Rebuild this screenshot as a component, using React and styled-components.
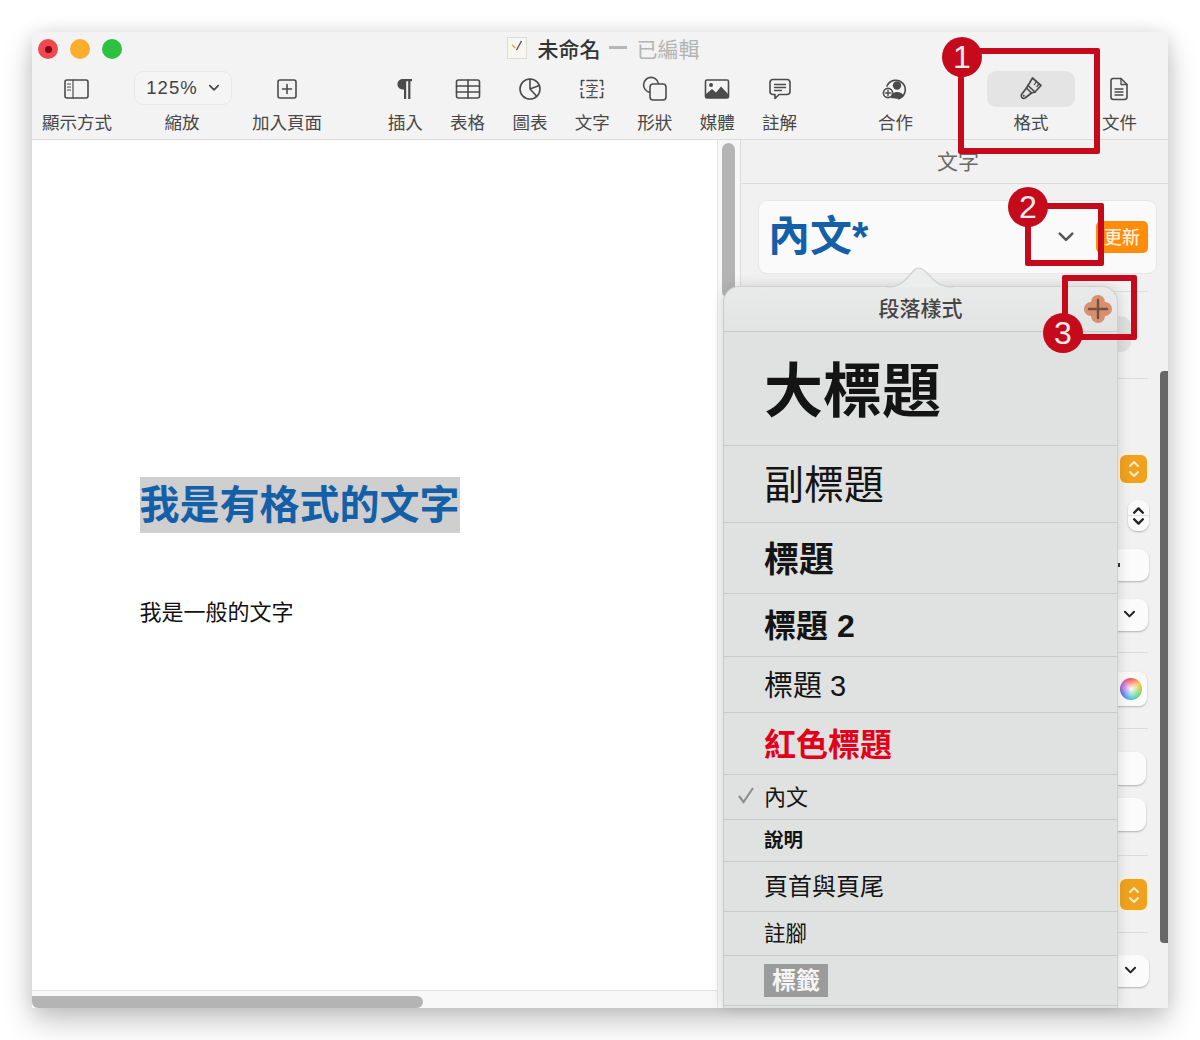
import React from 'react';
import styled, { createGlobalStyle } from 'styled-components';

const GlobalStyle = createGlobalStyle`
  html, body {
    margin: 0;
    padding: 0;
    background: #ffffff;
  }
  body {
    font-family: "Liberation Sans", "Noto Sans CJK TC", sans-serif;
  }
`;

const Page = styled.div`
  width: 1200px;
  height: 1040px;
  padding: 32px;
  box-sizing: border-box;
  overflow: hidden;
`;

const Window = styled.div`
  position: relative;
  width: 1136px;
  height: 976px;
  display: flex;
  flex-direction: column;
  background: #f2f3f2;
  border-radius: 6px 6px 0 0;
  box-shadow: 0 14px 30px rgba(0, 0, 0, 0.22), 0 0 18px rgba(0, 0, 0, 0.1);
`;

const TitleBar = styled.div`
  position: relative;
  height: 34px;
  flex: none;
  display: flex;
  align-items: center;
  justify-content: center;
`;

const Lights = styled.div`
  position: absolute;
  left: 6px;
  top: 7px;
  display: flex;
  gap: 12px;
`;

const Light = styled.span`
  width: 20px;
  height: 20px;
  border-radius: 50%;
  background: ${p => p.$color};
  display: flex;
  align-items: center;
  justify-content: center;
`;

const LightDot = styled.span`
  width: 7px;
  height: 7px;
  border-radius: 50%;
  background: #7a0a10;
`;

const TitleWrap = styled.div`
  display: flex;
  align-items: center;
  margin: -3px 0 0 5px;
  height: 32px;
`;

const TitleName = styled.span`
  font-size: 21px;
  font-weight: 500;
  color: #333;
  margin-left: 10px;
`;

const TitleDash = styled.span`
  width: 18px;
  height: 2.5px;
  background: #b5b7b6;
  margin: 0 10px 0 8px;
`;

const TitleState = styled.span`
  font-size: 21px;
  color: #b3b5b4;
`;

const Toolbar = styled.div`
  height: 74px;
  flex: none;
  display: flex;
  padding-top: 5px;
  box-sizing: border-box;
  border-bottom: 1px solid #d9dad9;
`;

const ToolItem = styled.div`
  width: ${p => p.$w}px;
  margin-left: ${p => p.$ml || 0}px;
  flex: none;
  display: flex;
  flex-direction: column;
  align-items: center;
`;

const IconSlot = styled.div`
  height: 36px;
  width: ${p => (p.$active ? '88px' : 'auto')};
  min-width: 30px;
  display: flex;
  align-items: center;
  justify-content: center;
  margin-bottom: 4px;
  border-radius: 9px;
  background: ${p => (p.$active ? '#e3e4e3' : 'transparent')};
  color: #4b4b4b;
`;

const ToolLabel = styled.div`
  font-size: 17.5px;
  line-height: 24px;
  color: #474747;
  white-space: nowrap;
`;

const ZoomSelect = styled.div`
  width: 98px;
  height: 34px;
  box-sizing: border-box;
  border: 1.5px solid #e8e9e7;
  border-radius: 9px;
  background: #f4f5f4;
  display: flex;
  align-items: center;
  justify-content: center;
  gap: 10px;
  font-size: 18.5px;
  letter-spacing: 1px;
  color: #444;
  margin: 0 0 6px 2px;
`;

const Body = styled.div`
  flex: 1;
  min-height: 0;
  display: flex;
`;

const DocColumn = styled.div`
  width: 685px;
  flex: none;
  display: flex;
  flex-direction: column;
`;

const Canvas = styled.div`
  flex: 1;
  background: #ffffff;
  border-bottom: 1.5px solid #e2e2e2;
  padding: 337px 0 0 107.5px;
  box-sizing: border-box;
`;

const Heading = styled.div`
  display: inline-block;
  height: 56px;
  line-height: 56px;
  font-size: 40px;
  font-weight: 700;
  color: #1460a8;
  background: #cfcfcf;
  white-space: nowrap;
`;

const PlainText = styled.div`
  margin-top: 64px;
  font-size: 22px;
  line-height: 32px;
  color: #111;
`;

const HTrack = styled.div`
  height: 17px;
  flex: none;
  display: flex;
  align-items: flex-end;
  background: #f8f8f8;
`;

const HThumb = styled.div`
  width: 391px;
  height: 12px;
  background: #b4b4b4;
  border-radius: 0 6px 6px 6px;
`;

const VGutter = styled.div`
  width: 24px;
  flex: none;
  box-sizing: border-box;
  background: #f7f7f7;
  border-left: 1.5px solid #e6e6e6;
  border-right: 1.5px solid #dcdcdc;
  padding: 3px 0 0 4px;
`;

const VThumb = styled.div`
  width: 13px;
  height: 155px;
  background: #b4b4b4;
  border-radius: 7px;
`;

const Inspector = styled.div`
  position: relative;
  flex: 1;
  display: flex;
  flex-direction: column;
  background: #f0f1f0;
`;

const PanelTitle = styled.div`
  height: 44px;
  flex: none;
  box-sizing: border-box;
  border-bottom: 1px solid #dcdddc;
  display: flex;
  align-items: center;
  justify-content: center;
  font-size: 21px;
  color: #6a6a6a;
  padding: 0 0 4px 7px;
`;

const StyleBox = styled.div`
  margin: 16px 11px 0 17px;
  height: 74px;
  flex: none;
  box-sizing: border-box;
  background: #fafafa;
  border: 1.5px solid #e6e7e6;
  border-radius: 9px;
  display: flex;
  align-items: center;
  padding: 0 8px 0 9px;
`;

const StyleName = styled.div`
  font-size: 42px;
  font-weight: 700;
  color: #1460a8;
  flex: 1;
  line-height: 74px;
`;

const UpdateButton = styled.div`
  width: 52px;
  height: 32px;
  background: #ff8c0a;
  color: #fff0dc;
  border-radius: 5px;
  margin-left: 21px;
  padding-bottom: 2px;
  box-sizing: border-box;
  font-size: 18px;
  font-weight: 500;
  display: flex;
  align-items: center;
  justify-content: center;
`;

const Rule = styled.div`
  margin: ${p => p.$top}px 20px 0 17px;
  height: 1px;
  flex: none;
  background: #dcdddc;
`;

const Control = styled.div`
  align-self: flex-end;
  flex: none;
  width: 200px;
  height: ${p => p.$h}px;
  margin: ${p => p.$top}px ${p => p.$right || 19}px 0 0;
  background: #fbfbfb;
  border-radius: 9px;
  box-shadow: 0 1px 2px rgba(0, 0, 0, 0.28);
  display: flex;
  align-items: center;
  justify-content: flex-end;
  padding-right: ${p => p.$pad || 12}px;
  box-sizing: border-box;
`;

const ControlTick = styled.span`
  width: 2.5px;
  height: 4px;
  background: #333;
`;

const Segmented = styled.div`
  align-self: flex-end;
  flex: none;
  width: 200px;
  height: 36px;
  margin: 24px 37px 0 0;
  background: #dfdfdf;
  border-radius: 10px;
`;

const OrangeStepper = styled.div`
  align-self: flex-end;
  flex: none;
  width: 27px;
  height: ${p => p.$h}px;
  margin: ${p => p.$top}px 21px 0 0;
  box-sizing: border-box;
  background: #f0a21e;
  border-radius: 6px;
  box-shadow: 0 0 0 2.5px #fbf3e2;
  display: flex;
  align-items: center;
  justify-content: center;
`;

const SmallStepper = styled.div`
  align-self: flex-end;
  flex: none;
  width: 21px;
  height: 31px;
  margin: 17px 19px 0 0;
  background: linear-gradient(#fafafa 49%, #dedede 49%, #dedede 52%, #fafafa 52%);
  border-radius: 9px;
  box-shadow: 0 1px 2px rgba(0, 0, 0, 0.28);
  display: flex;
  align-items: center;
  justify-content: center;
`;

const ColorWell = styled.div`
  align-self: flex-end;
  flex: none;
  width: 200px;
  height: 34px;
  margin: 19px 21px 0 0;
  background: #fafafa;
  border-radius: 8px;
  box-shadow: 0 1px 2px rgba(0, 0, 0, 0.25);
  display: flex;
  align-items: center;
  justify-content: flex-end;
  padding-right: 5px;
  box-sizing: border-box;
`;

const Wheel = styled.div`
  width: 22px;
  height: 22px;
  border-radius: 50%;
  background:
    radial-gradient(circle, rgba(255, 255, 255, 0.95) 0%, rgba(255, 255, 255, 0) 70%),
    conic-gradient(#f5504a, #f7c23e, #6fd35a, #3fc6d6, #5b6be0, #c658d0, #f5504a);
`;

const Scroller = styled.div`
  position: absolute;
  right: 0;
  top: 231px;
  width: 8px;
  height: 572px;
  background: #676767;
  border-radius: 4px 0 0 4px;
`;

const Popover = styled.div`
  position: absolute;
  left: 691px;
  top: 254px;
  width: 395px;
  bottom: 0;
  display: flex;
  flex-direction: column;
  background: #e0e2e1;
  border-left: 1.5px solid #c9cbca;
  border-right: 1px solid #cfd0cf;
  border-top: 1.5px solid #d0d1d0;
  border-radius: 16px 16px 0 0;
  box-sizing: border-box;
  box-shadow: 0 0 14px rgba(0, 0, 0, 0.14);
`;

const PopArrow = styled.svg`
  position: absolute;
  left: 163px;
  top: -21px;
`;

const PopHeader = styled.div`
  height: 45px;
  flex: none;
  display: flex;
  align-items: center;
  justify-content: center;
  font-size: 21px;
  font-weight: 500;
  color: #444;
  border-radius: 16px 16px 0 0;
  background: linear-gradient(#e9eaea, #e2e4e3);
  border-bottom: 1.5px solid #c9cbca;
  padding-bottom: 5px;
  box-sizing: border-box;
`;

const PlusButton = styled.svg`
  position: absolute;
  right: 4px;
  top: 7px;
`;

const RowList = styled.div`
  flex: 1;
  min-height: 0;
  overflow: hidden;
`;

const Row = styled.div`
  height: ${p => p.$h}px;
  box-sizing: border-box;
  border-bottom: 1.5px solid #c9cbca;
  display: flex;
  align-items: center;
  padding: 0 0 4px 40px;
  font-size: ${p => p.$size}px;
  font-weight: ${p => p.$weight || 400};
  color: ${p => p.$color || '#141414'};
  white-space: nowrap;
`;

const RowCheck = styled.svg`
  margin-left: -27px;
  margin-right: 9px;
  flex: none;
`;

const TagChip = styled.span`
  background: #9b9b9b;
  color: #f5f5f5;
  padding: 0 8px;
  margin-top: 4px;
  height: 33px;
  line-height: 33px;
  font-size: 24px;
  font-weight: 700;
`;

const CalloutBox = styled.div`
  position: absolute;
  left: ${p => p.$x}px;
  top: ${p => p.$y}px;
  width: ${p => p.$w}px;
  height: ${p => p.$h}px;
  box-sizing: border-box;
  border: 6px solid #c50a1c;
  border-radius: 2px;
  pointer-events: none;
`;

const Badge = styled.div`
  position: absolute;
  left: ${p => p.$x}px;
  top: ${p => p.$y}px;
  width: 40px;
  height: 40px;
  border-radius: 50%;
  background: #c50a1c;
  color: #fbeeee;
  font-size: 32px;
  line-height: 40px;
  font-weight: 500;
  text-align: center;
`;

const stroke = { fill: 'none', stroke: 'currentColor', strokeWidth: 1.6, strokeLinejoin: 'round', strokeLinecap: 'round' };

const ViewIcon = () => (
  <svg width="26" height="22" viewBox="0 0 26 22">
    <rect x="1" y="2" width="23" height="18" rx="2" {...stroke} />
    <path d="M9 2v18M3.5 6h3M3.5 9h3M3.5 12h3" {...stroke} strokeWidth="1.2" />
  </svg>
);

const AddPageIcon = () => (
  <svg width="22" height="22" viewBox="0 0 22 22">
    <rect x="2" y="2" width="18" height="18" rx="2" {...stroke} />
    <path d="M11 6.5v9M6.5 11h9" {...stroke} />
  </svg>
);

const ParagraphIcon = () => (
  <svg width="18" height="24" viewBox="0 0 18 24">
    <path d="M7.5 2H16v2.2h-1.6V22h-2.2V4.2h-2V22H8V12.6C3.8 12.6 1.5 10.4 1.5 7.2S3.8 2 7.5 2z" fill="currentColor" />
  </svg>
);

const TableIcon = () => (
  <svg width="26" height="22" viewBox="0 0 26 22">
    <rect x="1.5" y="2" width="23" height="18" rx="2" {...stroke} />
    <path d="M1.5 8h23M1.5 14h23M13 2v18" {...stroke} />
  </svg>
);

const ChartIcon = () => (
  <svg width="24" height="24" viewBox="0 0 24 24">
    <circle cx="12" cy="12" r="10" {...stroke} />
    <path d="M12 2v10l6.5 7M12 12l9.2-3.5" {...stroke} />
  </svg>
);

const TextIcon = () => (
  <svg width="26" height="22" viewBox="0 0 26 22">
    <path d="M5 2.5H2.5v5M2.5 14.5v5H5M21 2.5h2.5v5M23.5 14.5v5H21M1.5 11h2M22.5 11h2M8 2.5h10M8 19.5h10" {...stroke} />
    <text x="13" y="16" fontSize="13" textAnchor="middle" fill="currentColor" fontFamily="'Noto Sans CJK TC', sans-serif">字</text>
  </svg>
);

const ShapeIcon = () => (
  <svg width="26" height="26" viewBox="0 0 26 26">
    <path d="M7.5 16.2A7.5 7.5 0 1 1 16.4 7.3" {...stroke} />
    <rect x="8" y="8" width="16" height="16" rx="3" {...stroke} />
  </svg>
);

const MediaIcon = () => (
  <svg width="26" height="22" viewBox="0 0 26 22">
    <rect x="1.5" y="2" width="23" height="18" rx="1.5" {...stroke} />
    <path d="M2 20v-4l6-5 4 3.5 5-6 7 7.5V20z" fill="currentColor" />
    <circle cx="7" cy="7" r="2" fill="currentColor" />
  </svg>
);

const CommentIcon = () => (
  <svg width="24" height="24" viewBox="0 0 24 24">
    <path d="M5 2.5h14a3 3 0 0 1 3 3v9a3 3 0 0 1-3 3h-8l-4 4v-4H5a3 3 0 0 1-3-3v-9a3 3 0 0 1 3-3z" {...stroke} />
    <path d="M6.5 7.5h11M6.5 10.5h11M6.5 13.5h7" {...stroke} strokeWidth="1.3" />
  </svg>
);

const CollabIcon = () => (
  <svg width="26" height="24" viewBox="0 0 26 24">
    <path d="M5 9a9.5 9.5 0 1 1 11.5 12.8" {...stroke} />
    <circle cx="15" cy="8.5" r="4.2" fill="currentColor" />
    <path d="M8.8 21c.5-4 3-6 6.2-6s5.6 1.4 6.5 3.5c-1.6 2-3.8 3.2-6.3 3.3z" fill="currentColor" />
    <circle cx="6" cy="16" r="4.6" fill="#f2f3f2" stroke="currentColor" strokeWidth="1.6" />
    <path d="M6 13.5v5M3.5 16h5" {...stroke} strokeWidth="1.4" />
  </svg>
);

const BrushIcon = () => (
  <svg width="24" height="26" viewBox="0 0 24 26">
    <path d="M13.5 2L22 9.5 16 16 9 9.5z" {...stroke} strokeWidth="1.7" />
    <path d="M9 9.5L7.5 12l5 5 3.500-1" {...stroke} strokeWidth="1.7" />
    <path d="M7.500 12l-5 6.500a2.600 2.600 0 0 0 3.500 3.500l6.500-5" {...stroke} strokeWidth="1.7" />
    <path d="M17.500 5.500l-2 3M20 8l-2 2.500" {...stroke} strokeWidth="1.3" />
    <circle cx="4.800" cy="19.800" r="1" fill="currentColor" />
  </svg>
);

const DocIcon = () => (
  <svg width="20" height="24" viewBox="0 0 20 24">
    <path d="M4 1.5h8l6 6V20a2.5 2.5 0 0 1-2.5 2.5h-11A2.5 2.5 0 0 1 2 20V3.5a2 2 0 0 1 2-2z" {...stroke} />
    <path d="M12 1.5v6h6M6 12h8M6 15h8M6 18h8" {...stroke} strokeWidth="1.3" />
  </svg>
);

const Chevron = ({ size = 14, color = '#333', width = 2 }) => (
  <svg width={size} height={size * 0.7} viewBox="0 0 14 10">
    <path d="M2 2l5 5 5-5" fill="none" stroke={color} strokeWidth={width} strokeLinecap="round" strokeLinejoin="round" />
  </svg>
);

const UpDown = ({ color, width = 2, w = 12, h = 22 }) => (
  <svg width={w} height={h} viewBox="0 0 12 22">
    <path d="M2 8l4-4 4 4M2 14l4 4 4-4" fill="none" stroke={color} strokeWidth={width} strokeLinecap="round" strokeLinejoin="round" />
  </svg>
);

const DocGlyph = () => (
  <svg width="22" height="24" viewBox="0 0 22 24">
    <rect x="1.5" y="1.5" width="19" height="21" fill="#f8f6f0" stroke="#dcdcd8" />
    <path d="M15.5 5l-5 9" stroke="#5f5a50" strokeWidth="1.5" />
    <path d="M6 9l3.5 3" stroke="#e0a040" strokeWidth="1.3" />
  </svg>
);

const tools = [
  { label: '插入', icon: <ParagraphIcon />, ml: 42 },
  { label: '表格', icon: <TableIcon /> },
  { label: '圖表', icon: <ChartIcon /> },
  { label: '文字', icon: <TextIcon /> },
  { label: '形狀', icon: <ShapeIcon /> },
  { label: '媒體', icon: <MediaIcon /> },
  { label: '註解', icon: <CommentIcon /> },
];

const styles = [
  { name: '大標題', h: 114, size: 59, weight: 700 },
  { name: '副標題', h: 77, size: 40 },
  { name: '標題', h: 71, size: 35, weight: 700 },
  { name: '標題 2', h: 63, size: 32, weight: 700 },
  { name: '標題 3', h: 56, size: 29 },
  { name: '紅色標題', h: 62, size: 32, weight: 700, color: '#e2001a' },
  { name: '內文', h: 45, size: 22, checked: true },
  { name: '說明', h: 42, size: 19.5, weight: 700 },
  { name: '頁首與頁尾', h: 50, size: 24 },
  { name: '註腳', h: 44, size: 21.5 },
];

export default function App() {
  return (
    <Page>
      <GlobalStyle />
      <Window>
        <TitleBar>
          <Lights>
            <Light $color="#f0484e"><LightDot /></Light>
            <Light $color="#fbae2b" />
            <Light $color="#2cc13e" />
          </Lights>
          <TitleWrap>
            <DocGlyph />
            <TitleName>未命名</TitleName>
            <TitleDash />
            <TitleState>已編輯</TitleState>
          </TitleWrap>
        </TitleBar>

        <Toolbar>
          <ToolItem $w={90}>
            <IconSlot><ViewIcon /></IconSlot>
            <ToolLabel>顯示方式</ToolLabel>
          </ToolItem>
          <ToolItem $w={120}>
            <ZoomSelect>125% <Chevron size={12} color="#444" /></ZoomSelect>
            <ToolLabel>縮放</ToolLabel>
          </ToolItem>
          <ToolItem $w={90}>
            <IconSlot><AddPageIcon /></IconSlot>
            <ToolLabel>加入頁面</ToolLabel>
          </ToolItem>
          {tools.map(t => (
            <ToolItem key={t.label} $w={62.4} $ml={t.ml}>
              <IconSlot>{t.icon}</IconSlot>
              <ToolLabel>{t.label}</ToolLabel>
            </ToolItem>
          ))}
          <ToolItem $w={60} $ml={54.7}>
            <IconSlot><CollabIcon /></IconSlot>
            <ToolLabel>合作</ToolLabel>
          </ToolItem>
          <ToolItem $w={90} $ml={60.5}>
            <IconSlot $active><BrushIcon /></IconSlot>
            <ToolLabel>格式</ToolLabel>
          </ToolItem>
          <ToolItem $w={60} $ml={13.5}>
            <IconSlot><DocIcon /></IconSlot>
            <ToolLabel>文件</ToolLabel>
          </ToolItem>
        </Toolbar>

        <Body>
          <DocColumn>
            <Canvas>
              <Heading>我是有格式的文字</Heading>
              <PlainText>我是一般的文字</PlainText>
            </Canvas>
            <HTrack><HThumb /></HTrack>
          </DocColumn>
          <VGutter><VThumb /></VGutter>
          <Inspector>
            <PanelTitle>文字</PanelTitle>
            <StyleBox>
              <StyleName>內文*</StyleName>
              <Chevron size={18} color="#555" />
              <UpdateButton>更新</UpdateButton>
            </StyleBox>
            <Rule $top={17} />
            <Segmented />
            <Rule $top={26} />
            <OrangeStepper $top={76} $h={28}><UpDown color="#fdeccb" /></OrangeStepper>
            <SmallStepper><UpDown color="#222" width={2.2} w={13} h={26} /></SmallStepper>
            <Control $top={18} $h={32} $pad={29}><ControlTick /></Control>
            <Control $top={18} $h={32} $right={20}><Chevron size={13} color="#222" width={2.2} /></Control>
            <Rule $top={21} />
            <ColorWell><Wheel /></ColorWell>
            <Rule $top={22} />
            <Control $top={23} $h={33} $right={22} />
            <Control $top={13} $h={33} $right={22} />
            <Rule $top={24} />
            <OrangeStepper $top={23} $h={31}><UpDown color="#fdeccb" /></OrangeStepper>
            <Rule $top={22} />
            <Control $top={22} $h={32}><Chevron size={13} color="#222" width={2.2} /></Control>
            <Scroller />
          </Inspector>
        </Body>

        <Popover>
          <PopArrow width="66" height="22" viewBox="0 0 66 22">
            <path d="M0 21c10 0 15-3 22-11 5-6 6-8 10-8s6 3 11 8c7 8 12 11 23 11z" fill="#eceded" />
            <path d="M0 21c10 0 15-3 22-11 5-6 6-8 10-8s6 3 11 8c7 8 12 11 23 11" fill="none" stroke="#cfd0cf" strokeWidth="1.2" />
          </PopArrow>
          <PopHeader>段落樣式</PopHeader>
          <PlusButton width="30" height="30" viewBox="0 0 30 30">
            <g fill="#d98f6e">
              <circle cx="15" cy="8" r="7" />
              <circle cx="15" cy="22" r="7" />
              <circle cx="8" cy="15" r="7" />
              <circle cx="22" cy="15" r="7" />
            </g>
            <path d="M15 6v18M6 15h18" stroke="#6f5142" strokeWidth="2.4" strokeLinecap="round" />
          </PlusButton>
          <RowList>
            {styles.map(s => (
              <Row key={s.name} $h={s.h} $size={s.size} $weight={s.weight} $color={s.color}>
                {s.checked && (
                  <RowCheck width="18" height="18" viewBox="0 0 18 18">
                    <path d="M2 10l4.5 6L16 2" fill="none" stroke="#8f918f" strokeWidth="2.2" />
                  </RowCheck>
                )}
                {s.name}
              </Row>
            ))}
            <Row $h={50} $size={24}><TagChip>標籤</TagChip></Row>
          </RowList>
        </Popover>

        <CalloutBox $x={926} $y={16} $w={142} $h={106} />
        <Badge $x={910} $y={5}>1</Badge>
        <CalloutBox $x={993} $y={171} $w={79} $h={63} />
        <Badge $x={976} $y={155}>2</Badge>
        <CalloutBox $x={1030} $y={243} $w={75} $h={65} />
        <Badge $x={1011} $y={281}>3</Badge>
      </Window>
    </Page>
  );
}
